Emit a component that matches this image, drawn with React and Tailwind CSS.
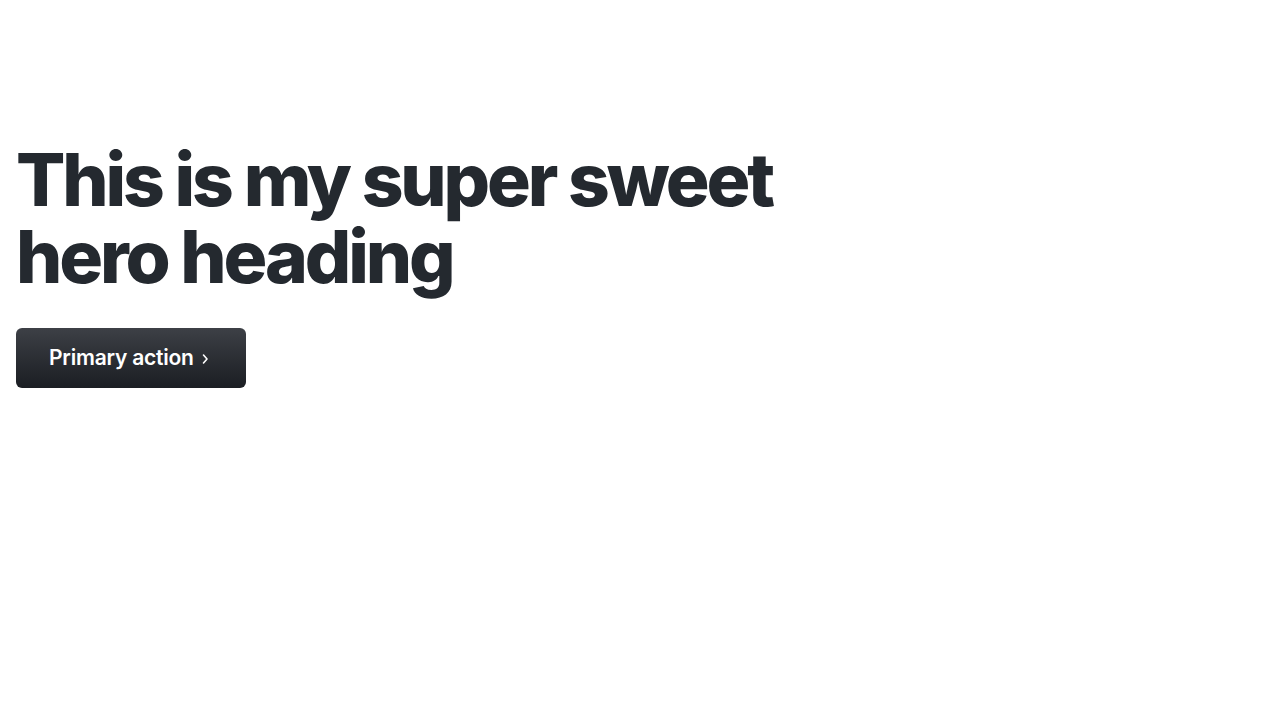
export default function App() {
  return (
    <div className="min-h-screen w-full bg-white" style={{ fontFamily: "Inter, 'Noto Sans', sans-serif" }}>
      <div className="px-4 pt-[141px]">
        <h1 className="text-[73px] leading-[77px] font-extrabold tracking-[-0.043em] text-[#24292f] whitespace-nowrap">
          This is my super sweet<br />hero heading
        </h1>
        <div className="mt-[33px]">
          <button className="flex items-center gap-[7px] h-[60px] pl-[33px] pr-[37px] rounded-md bg-gradient-to-b from-[#3d4046] to-[#1b1e23] text-white text-[21px] font-semibold tracking-[-0.01em]">
            <span>Primary action</span>
            <svg width="8" height="12" viewBox="0 0 8 12" fill="none" stroke="currentColor" strokeWidth="1.6" strokeLinecap="round" strokeLinejoin="round" className="mt-[1px]">
              <path d="M2.5 2 6 6 2.5 10" />
            </svg>
          </button>
        </div>
      </div>
    </div>
  );
}
